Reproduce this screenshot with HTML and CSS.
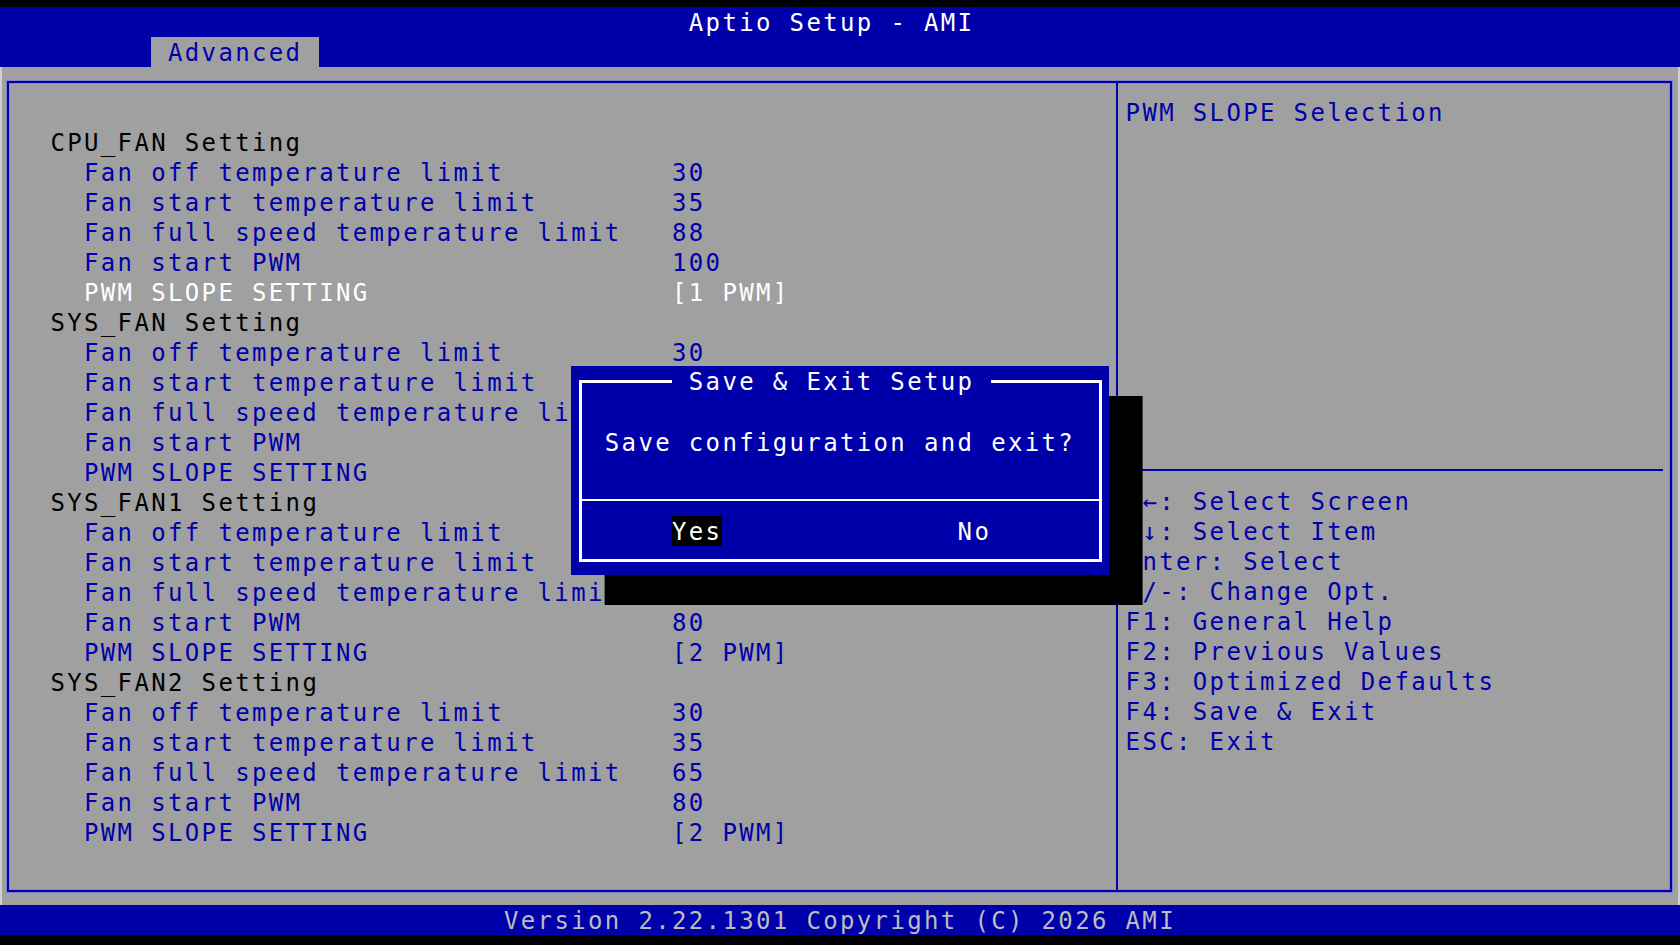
FILE: index.html
```html
<!DOCTYPE html>
<html lang="en">
<head>
    <meta charset="UTF-8">
    <meta name="viewport" content="width=device-width, initial-scale=1.0">
    <title>Aptio Setup - AMI</title>
    <link rel="stylesheet" href="styles.css">
</head>
<body>
<div class="screen">
    <!-- header -->
    <div class="topbar">
        <div class="title">Aptio Setup - AMI</div>
        <div class="tabs"><span class="tab">Advanced</span></div>
    </div>

    <div class="main">
        <div class="frame">
            <!-- fan settings -->
            <div class="settings">
                <div class="row head">CPU_FAN Setting</div>
                <div class="row"><span class="name">Fan off temperature limit</span><span>30</span></div>
                <div class="row"><span class="name">Fan start temperature limit</span><span>35</span></div>
                <div class="row"><span class="name">Fan full speed temperature limit</span><span>88</span></div>
                <div class="row"><span class="name">Fan start PWM</span><span>100</span></div>
                <div class="row sel"><span class="name">PWM SLOPE SETTING</span><span>[1 PWM]</span></div>

                <div class="row head">SYS_FAN Setting</div>
                <div class="row"><span class="name">Fan off temperature limit</span><span>30</span></div>
                <div class="row"><span class="name">Fan start temperature limit</span><span>35</span></div>
                <div class="row"><span class="name">Fan full speed temperature limit</span><span>65</span></div>
                <div class="row"><span class="name">Fan start PWM</span><span>80</span></div>
                <div class="row"><span class="name">PWM SLOPE SETTING</span><span>[2 PWM]</span></div>

                <div class="row head">SYS_FAN1 Setting</div>
                <div class="row"><span class="name">Fan off temperature limit</span><span>30</span></div>
                <div class="row"><span class="name">Fan start temperature limit</span><span>35</span></div>
                <div class="row"><span class="name">Fan full speed temperature limit</span><span>65</span></div>
                <div class="row"><span class="name">Fan start PWM</span><span>80</span></div>
                <div class="row"><span class="name">PWM SLOPE SETTING</span><span>[2 PWM]</span></div>

                <div class="row head">SYS_FAN2 Setting</div>
                <div class="row"><span class="name">Fan off temperature limit</span><span>30</span></div>
                <div class="row"><span class="name">Fan start temperature limit</span><span>35</span></div>
                <div class="row"><span class="name">Fan full speed temperature limit</span><span>65</span></div>
                <div class="row"><span class="name">Fan start PWM</span><span>80</span></div>
                <div class="row"><span class="name">PWM SLOPE SETTING</span><span>[2 PWM]</span></div>
            </div>

            <!-- help pane -->
            <div class="side">
                <div class="help-top">PWM SLOPE Selection</div>
                <div class="keys">
                    <div class="line">→←: Select Screen</div>
                    <div class="line">↑↓: Select Item</div>
                    <div class="line">Enter: Select</div>
                    <div class="line">+/-: Change Opt.</div>
                    <div class="line">F1: General Help</div>
                    <div class="line">F2: Previous Values</div>
                    <div class="line">F3: Optimized Defaults</div>
                    <div class="line">F4: Save &amp; Exit</div>
                    <div class="line">ESC: Exit</div>
                </div>
            </div>
        </div>
    </div>

    <div class="footer">Version 2.22.1301 Copyright (C) 2026 AMI</div>

    <!-- popup -->
    <div class="dialog">
        <div class="dlg-frame">
            <span class="dlg-title"> Save &amp; Exit Setup </span>
            <div class="dlg-msg">Save configuration and exit?</div>
            <div class="dlg-btns">
                <span class="btn active">Yes</span>
                <span class="btn">No</span>
            </div>
        </div>
    </div>
</div>
</body>
</html>
```

FILE: styles.css
```css
:root {
    --c: 16.8px; /* one text column */
    --blue: #0000aa;
    --gray: #a0a0a0;
}

* {
    box-sizing: border-box;
    margin: 0;
    padding: 0;
}

body {
    background-color: #000;
    font-family: "DejaVu Sans Mono", "Liberation Mono", monospace;
    font-size: 24px;
    line-height: 30px;
    letter-spacing: 2.35px;
    white-space: nowrap;
}

.screen {
    position: relative;
    width: 1680px;
    height: 945px;
    padding-top: 7px;
}

/* header */
.topbar {
    background-color: var(--blue);
    height: 60px;
}

.title {
    color: #fff;
    height: 30px;
    padding: 1px 0 0 calc(41 * var(--c));
}

.tabs {
    display: flex;
    height: 30px;
    padding-left: calc(9 * var(--c));
}

.tab {
    background-color: var(--gray);
    color: var(--blue);
    width: calc(10 * var(--c));
    padding-left: var(--c);
    padding-top: 1px;
}

/* main area */
.main {
    background-color: var(--gray);
    height: 838px;
    border-left: 2px solid #cfcfcf;
    border-right: 2px solid #cfcfcf;
    padding: 14px 6px 13px 5px;
}

.frame {
    display: flex;
    height: 100%;
    border: 2px solid var(--blue);
    box-shadow: 0 0 0 1px #8282c8, inset 0 0 0 1px #8c8cc4;
}

.settings {
    flex: 1;
    padding: 45px 0 0 41.4px;
}

.row {
    display: grid;
    grid-template-columns: calc(37 * var(--c)) auto;
    height: 30px;
    color: var(--blue);
}

.row .name {
    padding-left: calc(2 * var(--c));
}

.row.head {
    color: #000;
}

.row.sel {
    color: #fff;
}

.side {
    width: 554px;
    border-left: 2px solid var(--blue);
    display: flex;
    flex-direction: column;
    color: var(--blue);
}

.help-top {
    height: 388px;
    padding: 15px 0 0 7.6px;
    margin-right: 7px;
    border-bottom: 2px solid var(--blue);
}

.keys {
    padding: 16px 0 0 7.6px;
}

.line {
    height: 30px;
}

/* footer */
.footer {
    background-color: var(--blue);
    color: #bdbdbd;
    height: 30px;
    padding: 1px 0 0 calc(30 * var(--c));
}

/* save & exit popup */
.dialog {
    position: absolute;
    left: calc(34 * var(--c));
    top: 366px;
    width: calc(32 * var(--c));
    height: 209px;
    background-color: var(--blue);
    box-shadow: calc(2 * var(--c)) 30px 0 #000;
    padding: 14px 7px 13px 8px;
    color: #fff;
}

.dlg-frame {
    position: relative;
    height: 100%;
    border: 3px solid #fff;
}

.dlg-title {
    position: absolute;
    top: -16px;
    left: 89.8px;
    background-color: var(--blue);
    white-space: pre;
}

.dlg-msg {
    height: 118px;
    padding: 45px 0 0 22.6px;
    border-bottom: 2px solid #fff;
}

.dlg-btns {
    display: flex;
    padding: 15px 0 0 89.8px;
    height: 45px;
}

.btn {
    height: 30px;
    padding-top: 1px;
}

.btn.active {
    background-color: #000;
    margin-right: calc(14 * var(--c));
}
```
